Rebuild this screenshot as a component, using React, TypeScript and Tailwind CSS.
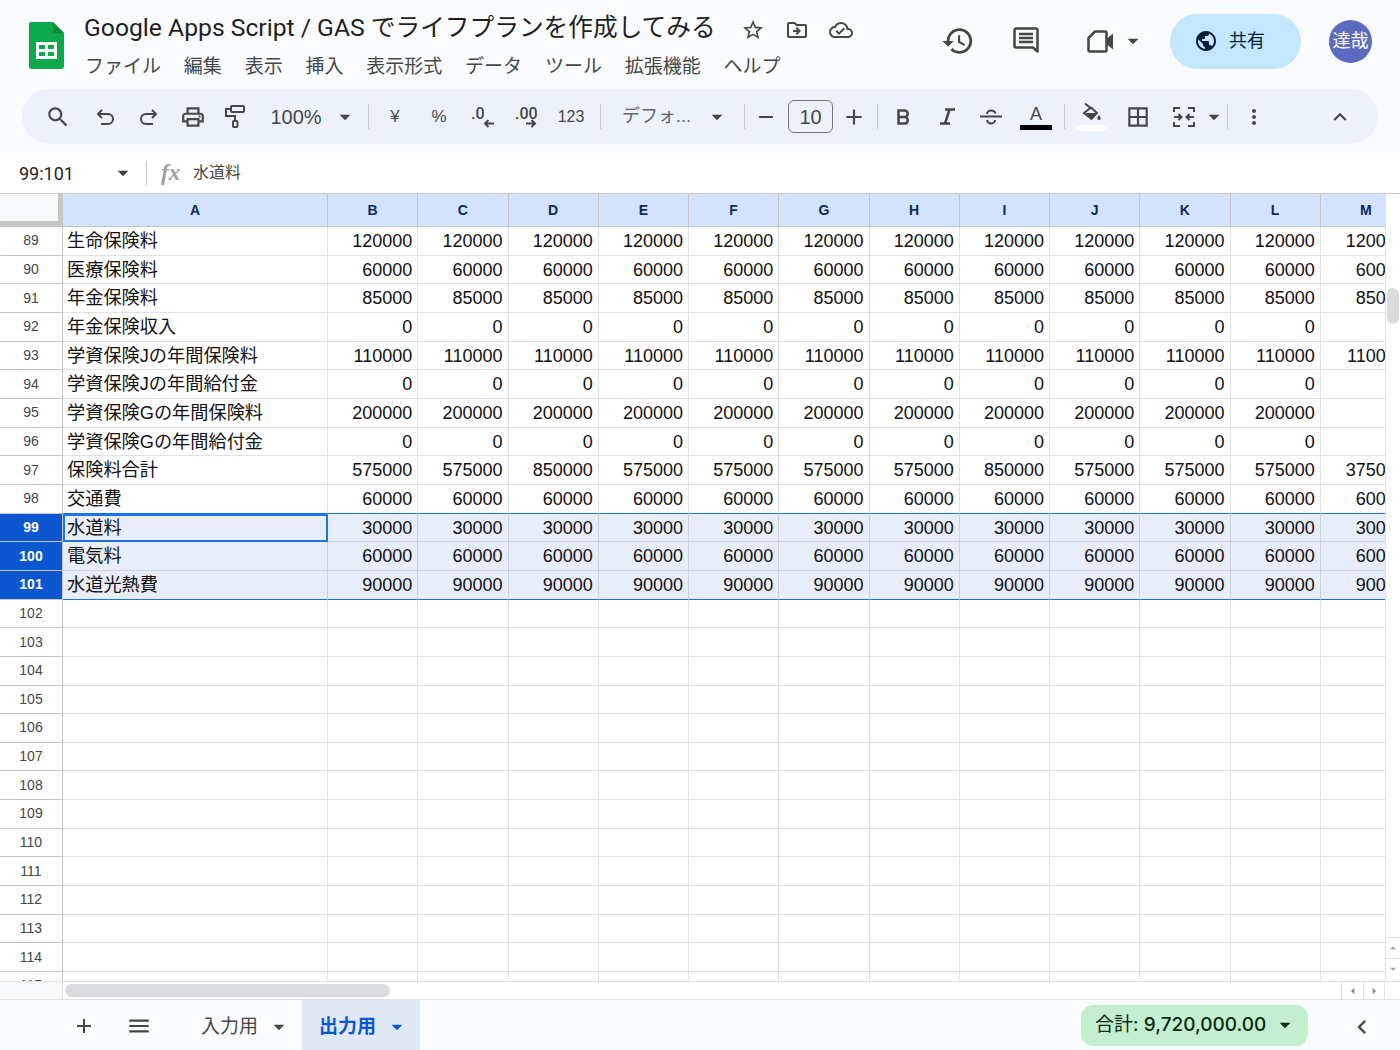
import React from 'react';
import {
  MdSearch, MdOutlinePrint, MdArrowDropDown, MdRemove, MdAdd, MdBorderAll, MdMoreVert, MdExpandLess,
  MdStarBorder, MdOutlineDriveFileMove, MdOutlineCloudDone, MdHistory,
  MdPublic, MdMenu, MdChevronLeft, MdArrowDropUp, MdArrowLeft, MdArrowRight,
} from 'react-icons/md';

const columns = ['B', 'C', 'D', 'E', 'F', 'G', 'H', 'I', 'J', 'K', 'L', 'M'];
const menus = ['ファイル', '編集', '表示', '挿入', '表示形式', 'データ', 'ツール', '拡張機能', 'ヘルプ'];

const same = (v: string, m: string = v) => [...Array(11).fill(v), m] as string[];

const rows: { n: number; label: string; vals: string[] }[] = [
  { n: 89, label: '生命保険料', vals: same('120000') },
  { n: 90, label: '医療保険料', vals: same('60000') },
  { n: 91, label: '年金保険料', vals: same('85000') },
  { n: 92, label: '年金保険収入', vals: same('0') },
  { n: 93, label: '学資保険Jの年間保険料', vals: same('110000') },
  { n: 94, label: '学資保険Jの年間給付金', vals: same('0') },
  { n: 95, label: '学資保険Gの年間保険料', vals: same('200000', '') },
  { n: 96, label: '学資保険Gの年間給付金', vals: same('0') },
  {
    n: 97,
    label: '保険料合計',
    vals: ['575000', '575000', '850000', '575000', '575000', '575000', '575000', '850000', '575000', '575000', '575000', '375000'],
  },
  { n: 98, label: '交通費', vals: same('60000') },
  { n: 99, label: '水道料', vals: same('30000') },
  { n: 100, label: '電気料', vals: same('60000') },
  { n: 101, label: '水道光熱費', vals: same('90000') },
  ...Array.from({ length: 14 }, (_, i) => ({ n: 102 + i, label: '', vals: same('') })),
];

const Sep = ({ className = '' }: { className?: string }) => <div className={`w-px h-[25px] bg-[#c7c7c7] shrink-0 ${className}`} />;

const Slot = ({ className, children }: { className: string; children: React.ReactNode }) => (
  <div className={`flex items-center justify-center shrink-0 h-full ${className}`}>{children}</div>
);

const SheetsLogo = () => (
  <svg width="35" height="47" viewBox="0 0 35 47" className="shrink-0">
    <path d="M2 0h22l11 11v33a3 3 0 0 1-3 3H3a3 3 0 0 1-3-3V2a2 2 0 0 1 2-2z" fill="#0ba94c" />
    <path d="M24 0l11 11H26a2 2 0 0 1-2-2z" fill="#0a8a3e" />
    <path d="M7 20h21v17H7z M10 23v4h6v-4z M19 23v4h6v-4z M10 30v4h6v-4z M19 30v4h6v-4z" fill="#fff" fillRule="evenodd" />
  </svg>
);

const Stroke = ({ w, h, d, sw = 2 }: { w: number; h: number; d: string; sw?: number }) => (
  <svg width={w} height={h} viewBox={`0 0 ${w} ${h}`} fill="none" stroke="#444746" strokeWidth={sw}>
    <path d={d} />
  </svg>
);

const PaintIcon = () => (
  <svg width="20" height="23" viewBox="0 0 20 23" fill="none" stroke="#444746" strokeWidth="2">
    <rect x="6" y="1" width="13" height="6" rx="1" />
    <path d="M6 4H1v7h9v5" />
    <rect x="8" y="16" width="4.500" height="6" rx="1" />
  </svg>
);

const FillIcon = () => (
  <svg width="20" height="19" viewBox="0 0 20 19" fill="none" stroke="#444746" strokeWidth="2">
    <path d="M3 0.500l6 5 M2 10l7-5.500 6 5.500-5.500 6z" />
    <path d="M3.500 10h11l-5 5.500z" fill="#444746" stroke="none" />
    <path d="M17 12c-1 1.500-1.700 2.300-1.700 3.200a1.700 1.700 0 0 0 3.400 0c0-.9-.7-1.700-1.700-3.200z" fill="#444746" stroke="none" />
  </svg>
);

const CommentIcon = () => (
  <svg width="26" height="28" viewBox="0 0 26 28" fill="none" stroke="#444746" strokeWidth="2.500">
    <path d="M3 1.500h20a1.500 1.500 0 0 1 1.500 1.500v21.500l-4.500-4H3a1.500 1.500 0 0 1-1.500-1.500V3A1.500 1.500 0 0 1 3 1.500z" strokeLinejoin="round" />
    <path d="M6 7h14 M6 11h14 M6 15h14" />
  </svg>
);

const VideoIcon = () => (
  <svg width="27" height="23" viewBox="0 0 27 23" fill="none" stroke="#444746" strokeWidth="2.500">
    <path d="M8 1.500h10a1.500 1.500 0 0 1 1.500 1.500v17a1.500 1.500 0 0 1-1.500 1.500H3A1.500 1.500 0 0 1 1.500 20V8z" strokeLinejoin="round" />
    <path d="M20 8.500l6-5v16l-6-5z" fill="#444746" stroke="none" />
  </svg>
);

const Toolbar = () => (
  <div className="mx-[22px] h-[55px] rounded-full bg-[#edf2fa] flex items-center text-[#444746]">
    <Slot className="w-[44px] ml-[14px]"><MdSearch size={26} /></Slot>
    <Slot className="w-[50px]"><Stroke w={20} h={20} d="M7 3L3 7l4 4 M3 7h10a5 5 0 0 1 0 10H6" /></Slot>
    <Slot className="w-[38px]"><Stroke w={20} h={20} d="M13 3l4 4-4 4 M17 7H7a5 5 0 0 0 0 10h7" /></Slot>
    <Slot className="w-[50px]"><MdOutlinePrint size={26} /></Slot>
    <Slot className="w-[34px]"><PaintIcon /></Slot>
    <Slot className="w-[50px] ml-[19px] text-[20px]">100%</Slot>
    <Slot className="w-[47px]"><MdArrowDropDown size={26} /></Slot>
    <Sep />
    <Slot className="w-[52px] text-[17px]">¥</Slot>
    <Slot className="w-[36px] text-[17px]">%</Slot>
    <Slot className="w-[50px]">
      <div className="relative w-[26px] h-[30px] pl-[2px] pt-[2px] text-[16px] font-medium leading-[20px] font-['Roboto',sans-serif]">
        .0
        <div className="absolute right-[1px] bottom-[4px] flex">
          <Stroke w={11} h={9} d="M11 4.500H2 M5.500 1L2 4.500 5.500 8" />
        </div>
      </div>
    </Slot>
    <Slot className="w-[38px]">
      <div className="relative w-[26px] h-[30px] pl-[2px] pt-[2px] text-[16px] font-medium leading-[20px] whitespace-nowrap font-['Roboto',sans-serif]">
        .00
        <div className="absolute right-[2px] bottom-[4px] flex">
          <Stroke w={11} h={9} d="M0 4.500h9 M5.500 1L9 4.500 5.500 8" />
        </div>
      </div>
    </Slot>
    <Slot className="w-[52px] text-[16px]">123</Slot>
    <Sep className="ml-[3px]" />
    <Slot className="w-[71px] ml-[20px] text-[18px] text-[#5f6368] whitespace-nowrap">デフォ...</Slot>
    <Slot className="w-[50px]"><MdArrowDropDown size={26} /></Slot>
    <Sep className="ml-[2px]" />
    <Slot className="w-[42px]"><MdRemove size={24} /></Slot>
    <div className="w-[45px] h-[33px] ml-px shrink-0 rounded-[6px] border border-[#747775] flex items-center justify-center text-[20px]">10</div>
    <Slot className="w-[42px]"><MdAdd size={26} /></Slot>
    <Sep className="ml-[2px]" />
    <Slot className="w-[50px]"><Stroke w={13} h={16} sw={2.500} d="M1.500 1.500h6a3 3 0 0 1 0 6.500h-6z M1.500 8h7a3.500 3.500 0 0 1 0 6.500h-7z" /></Slot>
    <Slot className="w-[38px]"><Stroke w={15} h={17} sw={2.500} d="M5 1.500h10 M0 15.500h10 M9.500 1.500L5 15.500" /></Slot>
    <Slot className="w-[50px]"><Stroke w={22} h={16} d="M0 7.500h22 M7 5c0-2 2-3.500 4-3.500s4 1 4.500 3 M7 11c.5 2 2 3.500 4 3.500s4-1.500 4-3.500" /></Slot>
    <Slot className="w-[40px]">
      <div className="flex flex-col items-center w-[32px]">
        <span className="text-[18px] leading-[22px]">A</span>
        <div className="w-full h-[5px] bg-black" />
      </div>
    </Slot>
    <Sep className="ml-[8px]" />
    <Slot className="w-[54px]">
      <div className="flex flex-col items-center w-[32px]">
        <FillIcon />
        <div className="w-full h-[6px] mt-[3px] bg-white" />
      </div>
    </Slot>
    <Slot className="w-[38px]"><MdBorderAll size={26} /></Slot>
    <Slot className="w-[46px] ml-[4px]"><Stroke w={22} h={20} d="M7 1H1v4 M15 1h6v4 M7 19H1v-4 M15 19h6v-4 M1 10h7 M5.500 7l3 3-3 3 M21 10h-7 M16.500 7l-3 3 3 3" /></Slot>
    <Slot className="w-[13px]"><MdArrowDropDown size={26} className="shrink-0" /></Slot>
    <Sep className="ml-[7px]" />
    <Slot className="w-[52px]"><MdMoreVert size={24} /></Slot>
    <Slot className="w-[44px] ml-[38px]"><MdExpandLess size={26} /></Slot>
  </div>
);

const Grid = () => (
  <div className="flex h-[788px] border-t border-[#c7c7c7] bg-white shrink-0">
    <div className="w-[1385px] overflow-hidden shrink-0">
      <div className="grid grid-cols-[63px_265px_repeat(11,90.25px)_91px] w-[1411px] h-[33px] text-[14px] font-bold text-[#0b2a5e]">
        <div className="relative bg-[#f8f9fa] border-r-[5px] border-b-[6px] border-[#c4c7c5]" />
        <div className="bg-[#d3e3fd] border-r border-b border-[#c4c7c5] flex items-center justify-center">A</div>
        {columns.map((c) => (
          <div key={c} className="bg-[#d3e3fd] border-r border-b border-[#c4c7c5] flex items-center justify-center">{c}</div>
        ))}
      </div>
      {rows.map((r) => {
        const selected = r.n >= 99 && r.n <= 101;
        const lineColor = r.n === 98 || r.n === 101 ? 'border-b-[#1a73e8]' : selected ? 'border-b-[#ccd3e0]' : 'border-b-[#e1e1e1]';
        const cellBase = `border-r border-b h-[28.67px] overflow-hidden whitespace-nowrap leading-[29px] ${lineColor} ${selected ? 'bg-[#e7edf9] border-r-[#ccd3e0]' : 'border-r-[#e1e1e1]'}`;
        return (
          <div key={r.n} className="grid grid-cols-[63px_265px_repeat(11,90.25px)_91px] w-[1411px] h-[28.67px] text-[18px] text-[#111111]">
            <div className={`border-r border-b border-[#c4c7c5] flex items-center justify-center text-[14px] ${selected ? 'bg-[#0b57d0] text-white font-bold' : 'bg-white text-[#444746]'}`}>
              {r.n}
            </div>
            <div className={`${cellBase} pl-[4px] text-[18.200px] ${r.n === 99 ? 'outline-2 -outline-offset-2 outline-[#1a73e8]' : ''}`}>{r.label}</div>
            {r.vals.map((v, i) => (
              <div key={i} className={`${cellBase} text-right pr-[5px]`}>{v}</div>
            ))}
          </div>
        );
      })}
    </div>
    <div className="w-[15px] flex flex-col border-l border-[#e1e1e1] overflow-hidden">
      <div className="w-[12px] h-[36px] mt-[94px] ml-px rounded-full bg-[#dadce0] shrink-0" />
      <div className="mt-auto mb-[2px] flex flex-col text-[#9aa0a6]">
        <div className="h-[22px] flex items-center justify-center border-b border-[#e1e1e1] border-t"><MdArrowDropUp size={18} /></div>
        <div className="h-[20px] flex items-center justify-center"><MdArrowDropDown size={18} /></div>
      </div>
    </div>
  </div>
);

const HScroll = () => (
  <div className="h-[19px] flex bg-white border-t border-b border-[#e1e1e1] shrink-0">
    <div className="w-[63px] bg-[#f8f9fa] border-r border-[#e1e1e1] shrink-0" />
    <div className="w-[325px] h-[13px] mt-[1.500px] ml-[2px] rounded-full bg-[#dadce0] shrink-0" />
    <div className="ml-auto mr-[15px] flex text-[#80868b]">
      <div className="w-[22px] flex items-center justify-center border-l border-[#e1e1e1]"><MdArrowLeft size={16} /></div>
      <div className="w-[22px] flex items-center justify-center border-l border-r border-[#e1e1e1]"><MdArrowRight size={16} /></div>
    </div>
  </div>
);

const BottomBar = () => (
  <div className="flex-1 flex items-center text-[#444746]">
    <div className="w-[168px] shrink-0 flex items-center pt-[2px]">
      <Slot className="w-[30px] ml-[69px]"><MdAdd size={24} /></Slot>
      <Slot className="w-[30px] ml-[25px]"><MdMenu size={26} /></Slot>
    </div>
    <div className="flex items-center h-full w-[134px] shrink-0 pl-[33px] pt-[4px] text-[19px]">
      入力用
      <MdArrowDropDown size={26} className="ml-[8px]" />
    </div>
    <div className="flex items-center h-full w-[118px] shrink-0 pl-[17px] pt-[4px] bg-[#e1e9f7] text-[#0b57d0] text-[19px] font-bold">
      出力用
      <MdArrowDropDown size={26} className="ml-[8px]" />
    </div>
    <div className="ml-auto flex items-center justify-between w-[227px] h-[41px] pl-[14px] pr-[10px] rounded-[12px] bg-[#c4eed0] text-[#0a2912] text-[19px] font-['Inter','Noto_Sans_CJK_JP',sans-serif]">
      <span className="whitespace-nowrap">合計: <span className="font-medium">9,720,000.00</span></span>
      <MdArrowDropDown size={26} />
    </div>
    <Slot className="w-[30px] ml-[39px] mr-[23px] pt-[4px]"><MdChevronLeft size={28} /></Slot>
  </div>
);

export default function App() {
  return (
    <div className="w-[1400px] h-[1050px] overflow-hidden flex flex-col bg-[#f9fbfd] font-['Liberation_Sans','Noto_Sans_CJK_JP',sans-serif]">
      <header className="h-[89px] flex shrink-0 text-[#444746]">
        <div className="ml-[29px] mt-[22px]"><SheetsLogo /></div>
        <div className="ml-[20px] flex flex-col">
          <div className="flex items-center h-[30px] mt-[13px]">
            <h1 className="text-[24.700px] text-[#1f1f1f] whitespace-nowrap font-['Roboto','Noto_Sans_CJK_JP',sans-serif]">Google Apps Script / GAS でライフプランを作成してみる</h1>
            <div className="flex items-center ml-[25px] mt-[3px] gap-[20px]">
              <MdStarBorder size={24} />
              <MdOutlineDriveFileMove size={24} />
              <MdOutlineCloudDone size={24} />
            </div>
          </div>
          <nav className="flex gap-[22.800px] mt-[8px] ml-[1px] text-[19px] leading-[28px] font-['Noto_Sans_CJK_JP',sans-serif]">
            {menus.map((m) => <span key={m} className="whitespace-nowrap">{m}</span>)}
          </nav>
        </div>
        <div className="ml-auto flex items-center h-[82px] pr-[28px]">
          <MdHistory size={34} />
          <div className="ml-[38px] flex"><CommentIcon /></div>
          <div className="ml-[48px] flex"><VideoIcon /></div>
          <MdArrowDropDown size={26} className="ml-[6px]" />
          <div className="ml-[24px] w-[131px] h-[55px] rounded-full bg-[#c2e7ff] flex items-center text-[#001d35] text-[18px] pl-[24px] gap-[11px]">
            <MdPublic size={24} />
            共有
          </div>
          <div className="ml-[28px] w-[43px] h-[43px] rounded-full bg-[#5c6bc0] text-white text-[18px] flex items-center justify-center">達哉</div>
        </div>
      </header>
      <Toolbar />
      <div className="mt-[9px] h-[40px] bg-white flex items-center shrink-0 text-[#444746]">
        <span className="ml-[19px] w-[91px] text-[18px] text-[#1f1f1f] font-['Roboto',sans-serif]">99:101</span>
        <MdArrowDropDown size={26} />
        <div className="ml-[10px] w-px h-[24px] bg-[#c7c7c7]" />
        <span className="ml-[14px] w-[32px] text-[23px] italic font-bold text-[#a0a0a0] font-['Liberation_Serif',serif]">fx</span>
        <span className="text-[16px]">水道料</span>
      </div>
      <Grid />
      <HScroll />
      <BottomBar />
    </div>
  );
}
